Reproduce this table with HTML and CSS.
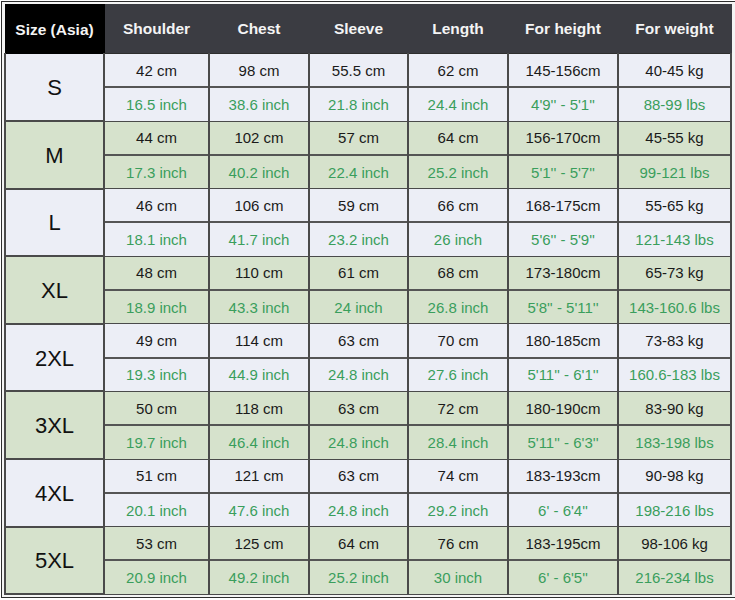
FILE: index.html
```html
<!DOCTYPE html>
<html>
<head>
<meta charset="utf-8">
<link rel="stylesheet" href="styles.css">
</head>
<body>
<div class="frame">
<table class="chart">
<colgroup>
<col class="c-size"><col class="c-sh"><col class="c-ch"><col class="c-sl"><col class="c-le"><col class="c-he"><col class="c-we">
</colgroup>
<thead>
<tr><th class="hsize">Size (Asia)</th><th>Shoulder</th><th>Chest</th><th>Sleeve</th><th>Length</th><th>For height</th><th>For weight</th></tr>
</thead>
<tbody>
<tr class="a"><td class="size" rowspan="2">S</td><td>42 cm</td><td>98 cm</td><td>55.5 cm</td><td>62 cm</td><td>145-156cm</td><td>40-45 kg</td></tr>
<tr class="a in"><td>16.5 inch</td><td>38.6 inch</td><td>21.8 inch</td><td>24.4 inch</td><td>4'9'' - 5'1''</td><td>88-99 lbs</td></tr>
<tr class="b"><td class="size" rowspan="2">M</td><td>44 cm</td><td>102 cm</td><td>57 cm</td><td>64 cm</td><td>156-170cm</td><td>45-55 kg</td></tr>
<tr class="b in"><td>17.3 inch</td><td>40.2 inch</td><td>22.4 inch</td><td>25.2 inch</td><td>5'1'' - 5'7''</td><td>99-121 lbs</td></tr>
<tr class="a"><td class="size" rowspan="2">L</td><td>46 cm</td><td>106 cm</td><td>59 cm</td><td>66 cm</td><td>168-175cm</td><td>55-65 kg</td></tr>
<tr class="a in"><td>18.1 inch</td><td>41.7 inch</td><td>23.2 inch</td><td>26 inch</td><td>5'6'' - 5'9''</td><td>121-143 lbs</td></tr>
<tr class="b"><td class="size" rowspan="2">XL</td><td>48 cm</td><td>110 cm</td><td>61 cm</td><td>68 cm</td><td>173-180cm</td><td>65-73 kg</td></tr>
<tr class="b in"><td>18.9 inch</td><td>43.3 inch</td><td>24 inch</td><td>26.8 inch</td><td>5'8'' - 5'11''</td><td>143-160.6 lbs</td></tr>
<tr class="a"><td class="size" rowspan="2">2XL</td><td>49 cm</td><td>114 cm</td><td>63 cm</td><td>70 cm</td><td>180-185cm</td><td>73-83 kg</td></tr>
<tr class="a in"><td>19.3 inch</td><td>44.9 inch</td><td>24.8 inch</td><td>27.6 inch</td><td>5'11'' - 6'1''</td><td>160.6-183 lbs</td></tr>
<tr class="b"><td class="size" rowspan="2">3XL</td><td>50 cm</td><td>118 cm</td><td>63 cm</td><td>72 cm</td><td>180-190cm</td><td>83-90 kg</td></tr>
<tr class="b in"><td>19.7 inch</td><td>46.4 inch</td><td>24.8 inch</td><td>28.4 inch</td><td>5'11'' - 6'3''</td><td>183-198 lbs</td></tr>
<tr class="a"><td class="size" rowspan="2">4XL</td><td>51 cm</td><td>121 cm</td><td>63 cm</td><td>74 cm</td><td>183-193cm</td><td>90-98 kg</td></tr>
<tr class="a in"><td>20.1 inch</td><td>47.6 inch</td><td>24.8 inch</td><td>29.2 inch</td><td>6' - 6'4''</td><td>198-216 lbs</td></tr>
<tr class="b"><td class="size" rowspan="2">5XL</td><td>53 cm</td><td>125 cm</td><td>64 cm</td><td>76 cm</td><td>183-195cm</td><td>98-106 kg</td></tr>
<tr class="b in"><td>20.9 inch</td><td>49.2 inch</td><td>25.2 inch</td><td>30 inch</td><td>6' - 6'5''</td><td>216-234 lbs</td></tr>
</tbody>
</table>
</div>
</body>
</html>
```
FILE: styles.css
```css
html, body {
  margin: 0;
  padding: 0;
  background: #ffffff;
}
body {
  font-family: "Liberation Sans", Arial, sans-serif;
}
.frame {
  margin: 1px 0 0 1px;
  width: 729px;
  border: 1px solid #2e2e2e;
  padding: 2px;
  background: #f4f4f4;
}
.chart {
  width: 727px;
  table-layout: fixed;
  border-collapse: collapse;
  border: 1px solid #3a3a3a;
}
.c-size { width: 99px; }
.c-sh { width: 105px; }
.c-ch { width: 100px; }
.c-sl { width: 99px; }
.c-le { width: 100px; }
.c-he { width: 110px; }
.c-we { width: 113px; }
.chart th {
  height: 46px;
  padding: 0;
  background: #3b3c42;
  color: #f4f4f4;
  font-size: 15.5px;
  font-weight: bold;
  text-align: center;
  border: 1px solid #3b3c42;
  border-bottom: 1px solid #2e2e2e;
}
.chart th.hsize {
  background: #000000;
  border-color: #000000;
  padding-top: 2px;
}
.chart td {
  height: 32.3px;
  padding: 0;
  text-align: center;
  font-size: 15px;
  color: #1a1a1a;
  border: 2px solid #4a4a4a;
  border-top-width: 1px;
  border-bottom-width: 1px;
}
.chart tr.in td {
  color: #3a9e5c;
  border-top: 2px solid #555;
}
.chart tr.a td { background: #eceef6; }
.chart tr.b td { background: #d6e2cc; }
.chart td.size {
  font-size: 22px;
  color: #111111;
  padding-top: 2px;
  border-bottom: 2px solid #4a4a4a;
}
```
